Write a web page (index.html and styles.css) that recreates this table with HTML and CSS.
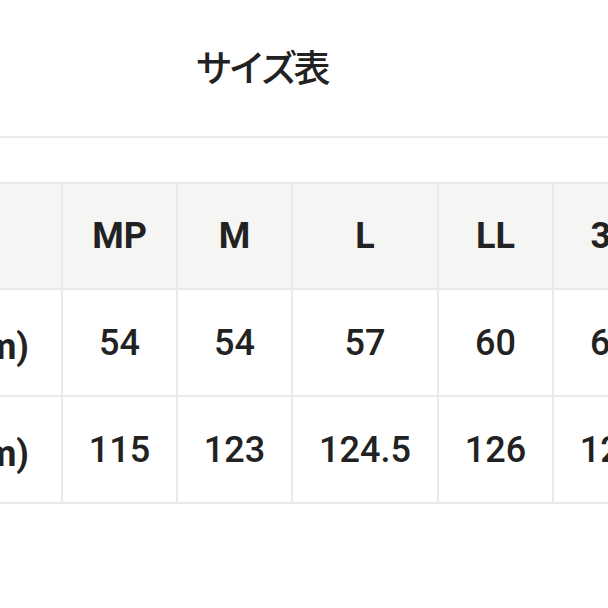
FILE: index.html
```html
<!DOCTYPE html>
<html lang="ja">
<head>
<meta charset="utf-8">
<link rel="stylesheet" href="styles.css">
</head>
<body>
<header class="heading"><h1 class="title">サイズ表</h1></header>
<div class="table-wrap">
<table class="size-table">
<colgroup>
<col class="c-label"><col class="c-std"><col class="c-std"><col class="c-wide"><col class="c-std"><col class="c-std">
</colgroup>
<thead>
<tr class="head-row"><th class="label"></th><th>MP</th><th>M</th><th>L</th><th>LL</th><th>3L</th></tr>
</thead>
<tbody>
<tr class="body-row"><th class="label">身幅(cm)</th><td>54</td><td>54</td><td>57</td><td>60</td><td>63</td></tr>
<tr class="body-row"><th class="label">着丈(cm)</th><td>115</td><td>123</td><td>124.5</td><td>126</td><td>127</td></tr>
</tbody>
</table>
</div>
</body>
</html>
```
FILE: styles.css
```css
html, body {
  margin: 0;
  padding: 0;
  background: #ffffff;
  width: 608px;
  height: 608px;
  overflow: hidden;
  font-family: Roboto, "Noto Sans CJK JP", sans-serif;
  color: #222222;
}
.heading {
  height: 136px;
  border-bottom: 2px solid #ebebeb;
  display: flex;
  justify-content: center;
  padding-right: 86px;
}
.title {
  margin: 0;
  padding-top: 40px;
  font-family: "Noto Sans CJK JP", sans-serif;
  font-size: 37px;
  font-weight: 500;
  letter-spacing: -4px;
  line-height: 52px;
  color: #222222;
}
.table-wrap {
  margin-top: 44px;
  width: 608px;
  overflow: hidden;
}
.size-table {
  border-collapse: collapse;
  table-layout: fixed;
  width: 856px;
  margin-left: -189px;
}
.c-label { width: 250px; }
.c-std { width: 115px; }
.c-wide { width: 146px; }
.size-table th,
.size-table td {
  border: 2px solid #e9e9e9;
  padding: 0;
  text-align: center;
  vertical-align: middle;
  font-size: 36px;
  color: #222222;
  white-space: nowrap;
}
.head-row th { height: 104px; }
.body-row th,
.body-row td { height: 105px; }
.size-table td { font-weight: 500; }
.size-table th { font-weight: 700; }
.size-table th.label {
  text-align: right;
  padding-right: 32px;
}
.size-table thead th { background: #f5f5f3; }
```
